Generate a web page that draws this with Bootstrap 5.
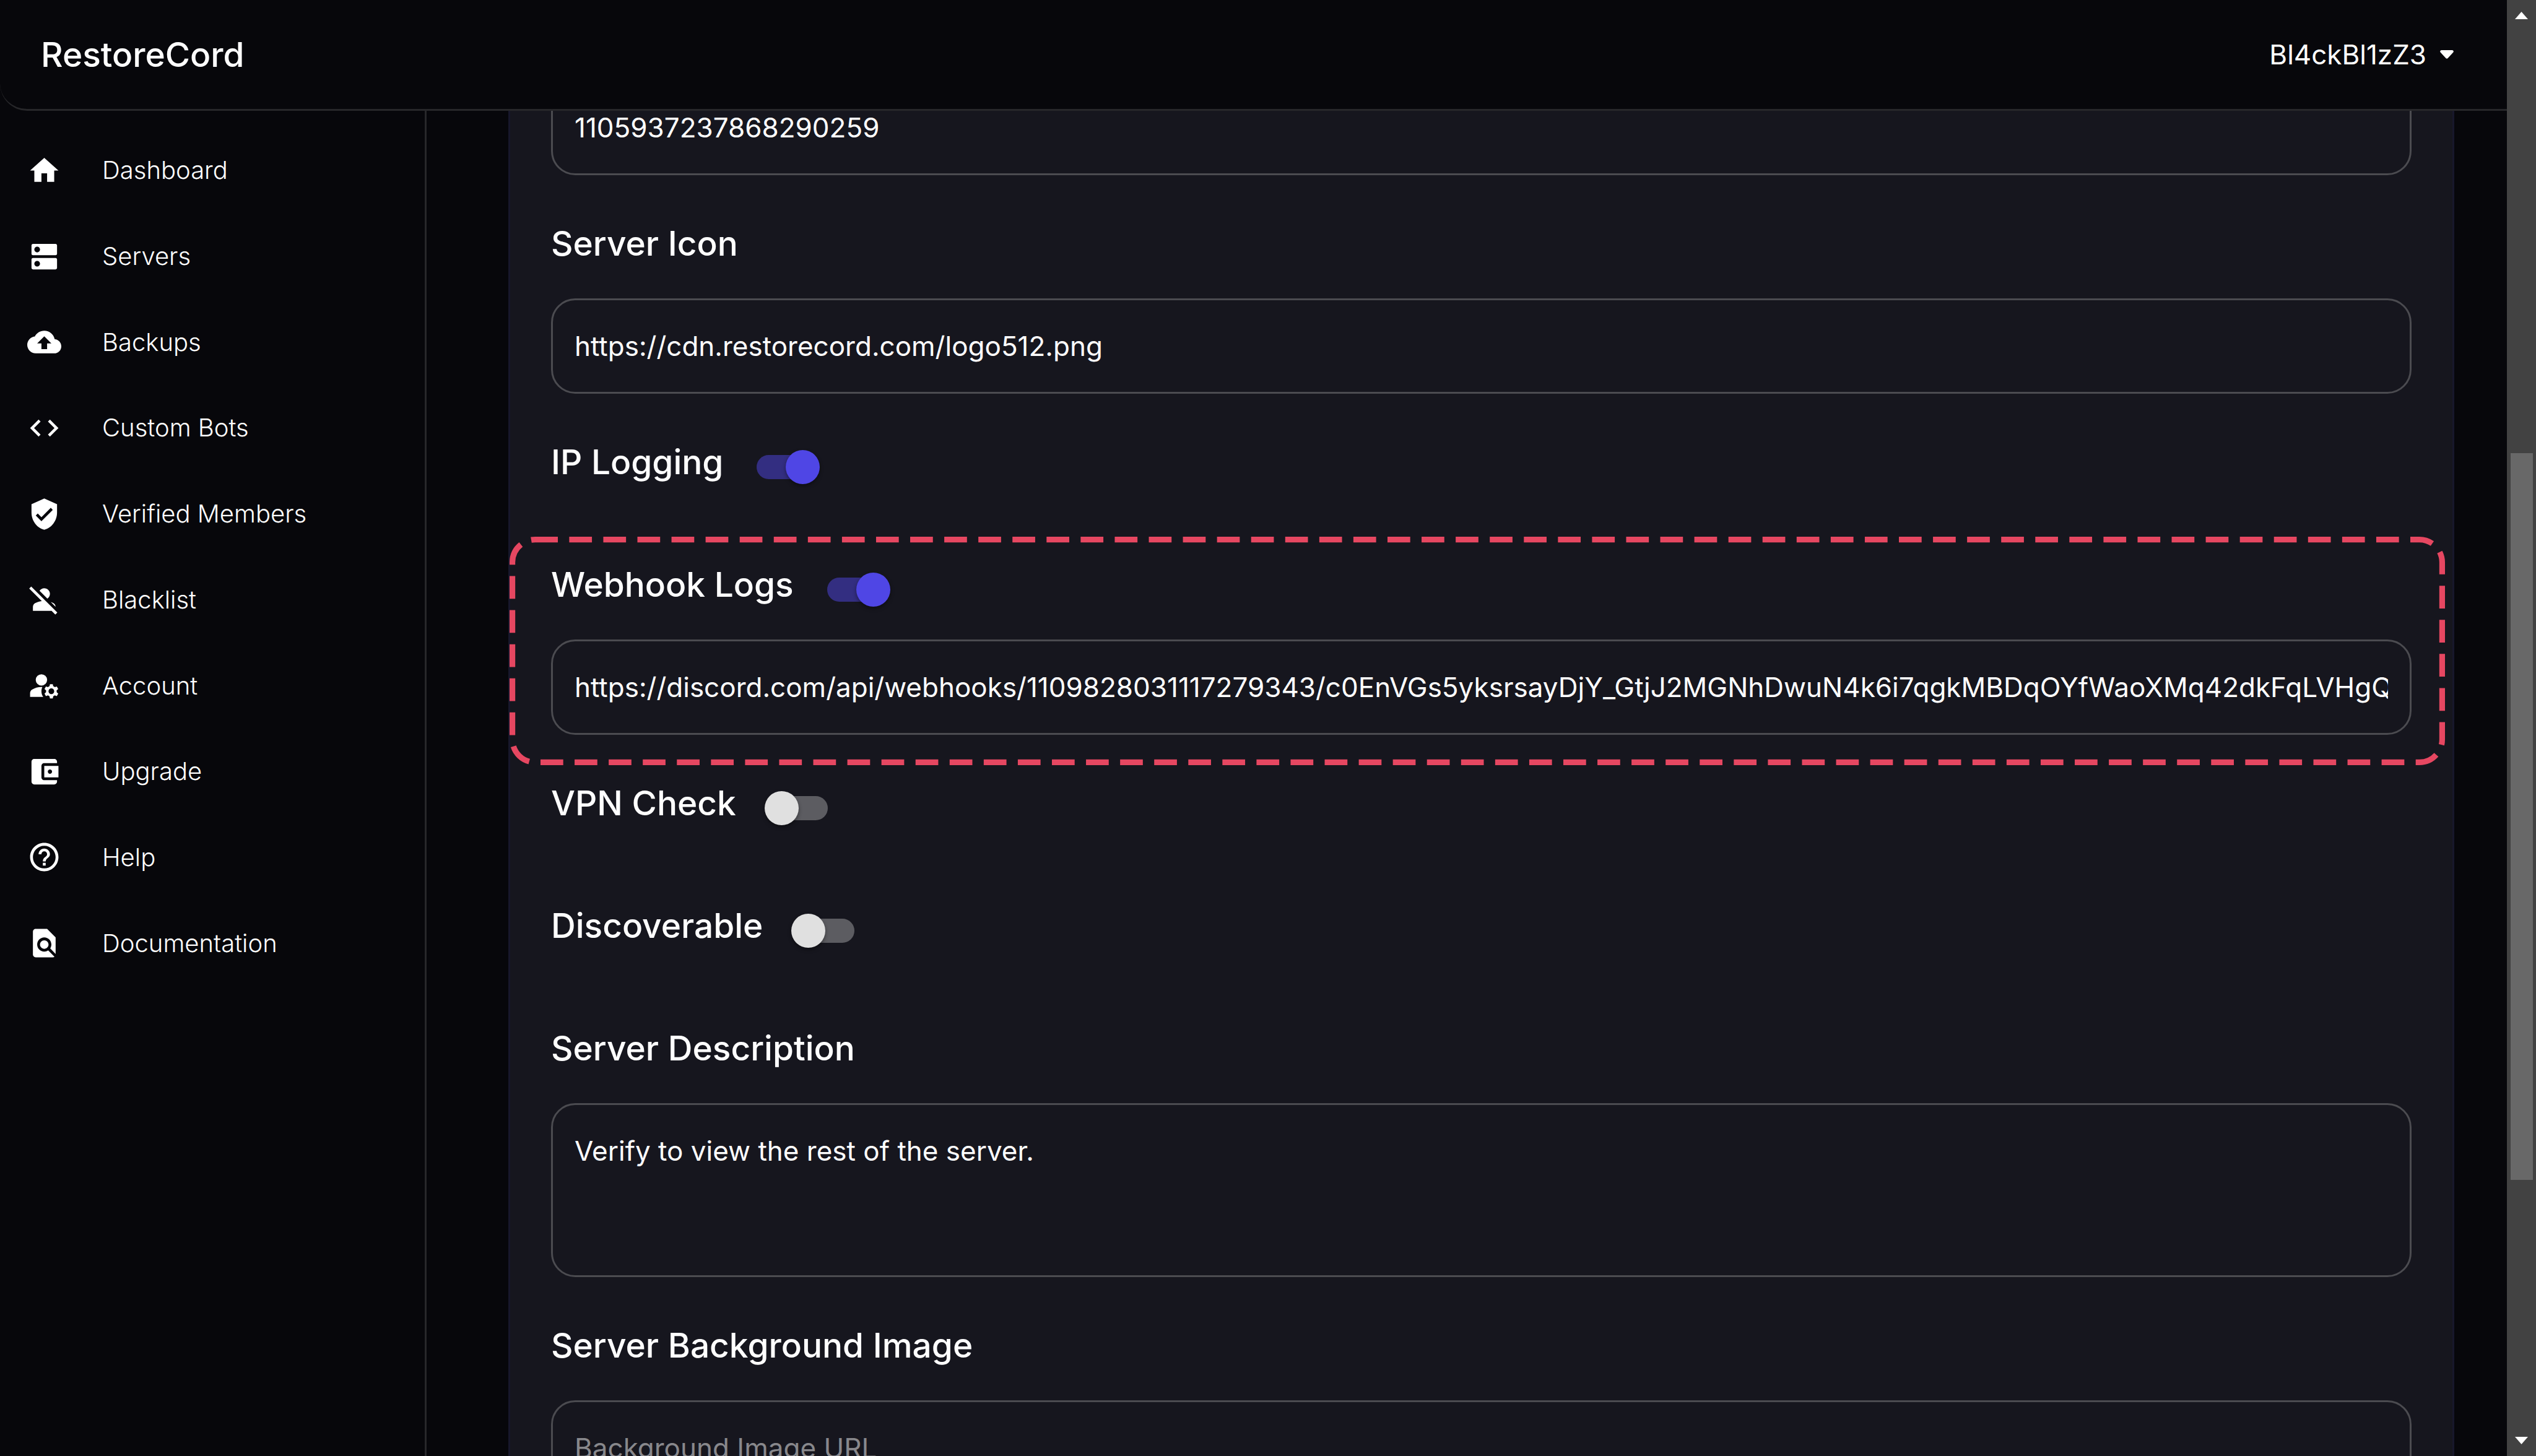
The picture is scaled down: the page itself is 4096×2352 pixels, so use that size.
<!DOCTYPE html>
<html lang="en" data-bs-theme="dark">
<head>
<meta charset="utf-8">
<meta name="viewport" content="width=device-width, initial-scale=1">
<title>RestoreCord</title>
<link href="https://cdn.jsdelivr.net/npm/bootstrap@5.3.0/dist/css/bootstrap.min.css" rel="stylesheet">
<style>
  :root { --page: #07070b; --panel: #16161e; --rule: #27272a; --field-line: #4b4b50; --accent: #4f46e5; }
  body { font-family: Inter, "Liberation Sans", sans-serif; font-size: 44px; background: var(--page); color: #fff; }
  .topbar { height: 179px; padding: 0 86px 0 66px; border-bottom: 3px solid var(--rule); border-bottom-left-radius: 44px; }
  .topbar .navbar-brand { font-size: 55px; line-height: 88px; font-weight: 500; color: #fff; }
  .user-menu { gap: 22px; padding: 0; border: 0; font-size: 44px; line-height: 66px; color: #fff; }
  .user-menu svg { width: 22px; height: 14px; }
  .side { width: 689px; padding-top: 27px; border-right: 3px solid var(--rule); }
  .side-list { height: 1387px; }
  .side-list a { gap: 66px; padding-left: 44px; font-size: 40px; font-weight: 300; color: #fff; text-decoration: none; }
  .side-list svg { width: 55px; height: 55px; fill: currentColor; }
  .content { padding: 0 85px 0 132px; min-width: 0; }
  .panel { margin-top: -120px; padding: 67px 66px; background: var(--panel); border: 3px solid #17172b; }
  .stack { gap: 66px; }
  .field-title { font-size: 55px; line-height: 88px; font-weight: 500; }
  .toggle-row { gap: 46px; }
  .toggle-only { margin-bottom: 44px; }
  .field { gap: 45px; }
  .panel .form-control { height: 154px; padding: 0 35px; border: 3px solid var(--field-line); border-radius: 39px; background: transparent; color: #fff; font-size: 44px; line-height: 63px; }
  .panel textarea.form-control { height: 281px; padding-top: 43px; resize: none; }
  .panel .form-control::placeholder { color: #88888c; opacity: 1; }
  .panel .switch { position: relative; width: 110px; height: 55px; margin: 16px 0 0; border: 0; border-radius: 28px; background: none; flex: none; }
  .switch::before { content: ""; position: absolute; left: 8px; top: 8px; width: 94px; height: 39px; border-radius: 20px; background: #5c5c61; }
  .switch::after { content: ""; position: absolute; left: 0; top: 0; width: 55px; height: 55px; border-radius: 50%; background: #e0e0e0; box-shadow: 0 3px 6px rgba(0,0,0,.4); }
  .switch:checked::before { background: #332e81; }
  .switch:checked::after { left: 55px; background: var(--accent); }
  .callout { inset: -33px -54px -49px -67px; pointer-events: none; }
  .scroller { width: 47px; padding: 19px 5px; background: #424242; }
  .scroller svg { width: 21px; height: 12px; fill: #fff; }
  .scroll-lane { margin: 12px 0; }
  .scroll-handle { background: #686868; width: 36px; }
</style>
<script src="https://cdn.jsdelivr.net/npm/bootstrap@5.3.0/dist/js/bootstrap.bundle.min.js"></script>
</head>
<body>
<div class="d-flex vh-100 overflow-hidden">
  <div class="d-flex flex-column flex-grow-1 overflow-hidden">
    <header class="topbar navbar flex-nowrap justify-content-between flex-shrink-0">
      <a class="navbar-brand p-0 m-0" href="#">RestoreCord</a>
      <button class="user-menu btn d-flex align-items-center" type="button" aria-haspopup="true">
        <span>Bl4ckBl1zZ3</span>
        <svg viewBox="0 0 22 14" aria-hidden="true"><path d="M2.5 0h17c2 0 3.200 2.200 1.600 3.800l-8.300 9a2.500 2.500 0 0 1-3.600 0l-8.300-9C-.7 2.200.5 0 2.500 0z" fill="#fff"/></svg>
      </button>
    </header>
    <div class="d-flex flex-grow-1 overflow-hidden">
      <nav class="side flex-shrink-0" aria-label="Main">
        <ul class="side-list list-unstyled d-flex flex-column m-0">
          <li class="d-flex flex-fill"><a class="d-flex align-items-center w-100" href="#"><svg viewBox="0 0 24 24"><path d="M10 20v-6h4v6h5v-8h3L12 3 2 12h3v8z"/></svg>Dashboard</a></li>
          <li class="d-flex flex-fill"><a class="d-flex align-items-center w-100" href="#"><svg viewBox="0 0 24 24"><path d="M20 13H4c-.55 0-1 .45-1 1v6c0 .55.45 1 1 1h16c.55 0 1-.45 1-1v-6c0-.55-.45-1-1-1zM7 19c-1.100 0-2-.9-2-2s.9-2 2-2 2 .9 2 2-.9 2-2 2zM20 3H4c-.55 0-1 .45-1 1v6c0 .55.45 1 1 1h16c.55 0 1-.45 1-1V4c0-.55-.45-1-1-1zM7 9c-1.100 0-2-.9-2-2s.9-2 2-2 2 .9 2 2-.9 2-2 2z"/></svg>Servers</a></li>
          <li class="d-flex flex-fill"><a class="d-flex align-items-center w-100" href="#"><svg viewBox="0 0 24 24"><path d="M19.350 10.040C18.670 6.590 15.640 4 12 4 9.110 4 6.600 5.640 5.350 8.040 2.340 8.360 0 10.910 0 14c0 3.310 2.690 6 6 6h13c2.760 0 5-2.240 5-5 0-2.640-2.050-4.780-4.650-4.960zM14 13v4h-4v-4H7l5-5 5 5h-3z"/></svg>Backups</a></li>
          <li class="d-flex flex-fill"><a class="d-flex align-items-center w-100" href="#"><svg viewBox="0 0 24 24"><path d="M9.400 16.600 4.800 12l4.600-4.600L8 6l-6 6 6 6 1.400-1.400zm5.200 0 4.600-4.600-4.600-4.600L16 6l6 6-6 6-1.400-1.400z"/></svg>Custom Bots</a></li>
          <li class="d-flex flex-fill"><a class="d-flex align-items-center w-100" href="#"><svg viewBox="0 0 24 24"><path d="M12 1 3 5v6c0 5.550 3.840 10.740 9 12 5.160-1.260 9-6.450 9-12V5l-9-4zm-2 16-4-4 1.410-1.410L10 14.170l6.590-6.590L18 9l-8 8z"/></svg>Verified Members</a></li>
          <li class="d-flex flex-fill"><a class="d-flex align-items-center w-100" href="#"><svg viewBox="0 0 24 24"><path d="M8.650 5.820C9.360 4.720 10.600 4 12 4c2.210 0 4 1.790 4 4 0 1.400-.72 2.640-1.820 3.350L8.650 5.820zM20 17.170c-.02-1.100-.63-2.110-1.610-2.620-.54-.28-1.130-.54-1.770-.76L20 17.170zm1.190 4.020L2.810 2.810 1.390 4.220l8.890 8.890c-1.810.23-3.390.79-4.670 1.450-1 .51-1.610 1.540-1.610 2.660V20h13.170l2.610 2.610 1.410-1.420z"/></svg>Blacklist</a></li>
          <li class="d-flex flex-fill"><a class="d-flex align-items-center w-100" href="#"><svg viewBox="0 0 24 24"><circle cx="10" cy="8" r="4"/><path d="M10.670 13.020c-.22-.01-.44-.02-.67-.02-2.420 0-4.680.67-6.610 1.820-.88.52-1.390 1.500-1.390 2.530V20h9.260c-.79-1.130-1.260-2.510-1.260-4 0-1.070.25-2.070.67-2.980zM20.750 16c0-.22-.03-.42-.06-.63l1.140-1.010-1-1.730-1.450.49c-.32-.27-.68-.48-1.080-.63L18 11h-2l-.3 1.490c-.4.15-.76.36-1.080.63l-1.450-.49-1 1.730 1.140 1.010c-.03.21-.06.41-.06.63s.03.42.06.63l-1.140 1.010 1 1.730 1.450-.49c.32.27.68.48 1.080.63L16 21h2l.3-1.490c.4-.15.76-.36 1.080-.63l1.450.49 1-1.730-1.140-1.010c.03-.21.06-.41.06-.63zM17 18c-1.100 0-2-.9-2-2s.9-2 2-2 2 .9 2 2-.9 2-2 2z"/></svg>Account</a></li>
          <li class="d-flex flex-fill"><a class="d-flex align-items-center w-100" href="#"><svg viewBox="0 0 24 24"><path d="M21 18v1c0 1.100-.9 2-2 2H5c-1.110 0-2-.9-2-2V5c0-1.100.89-2 2-2h14c1.100 0 2 .9 2 2v1h-9c-1.110 0-2 .9-2 2v8c0 1.100.89 2 2 2h9zm-9-2h10V8H12v8zm4-2.500c-.83 0-1.500-.67-1.500-1.500s.67-1.500 1.500-1.500 1.500.67 1.500 1.500-.67 1.500-1.500 1.500z"/></svg>Upgrade</a></li>
          <li class="d-flex flex-fill"><a class="d-flex align-items-center w-100" href="#"><svg viewBox="0 0 24 24"><path d="M11 18h2v-2h-2v2zm1-16C6.480 2 2 6.480 2 12s4.480 10 10 10 10-4.480 10-10S17.520 2 12 2zm0 18c-4.410 0-8-3.590-8-8s3.590-8 8-8 8 3.590 8 8-3.590 8-8 8zm0-14c-2.210 0-4 1.790-4 4h2c0-1.100.9-2 2-2s2 .9 2 2c0 2-3 1.750-3 5h2c0-2.250 3-2.500 3-5 0-2.210-1.790-4-4-4z"/></svg>Help</a></li>
          <li class="d-flex flex-fill"><a class="d-flex align-items-center w-100" href="#"><svg viewBox="0 0 24 24"><path d="M20 19.590V8l-6-6H6c-1.100 0-1.990.9-1.990 2L4 20c0 1.100.89 2 1.990 2H18c.45 0 .85-.15 1.190-.4l-4.430-4.430c-.8.52-1.740.83-2.760.83-2.760 0-5-2.240-5-5s2.240-5 5-5 5 2.240 5 5c0 1.020-.31 1.960-.83 2.750L20 19.590zM9 13c0 1.660 1.340 3 3 3s3-1.340 3-3-1.340-3-3-3-3 1.340-3 3z"/></svg>Documentation</a></li>
        </ul>
      </nav>
      <main class="content flex-grow-1">
        <form class="panel">
          <div class="stack d-flex flex-column">
            <input class="form-control" type="text" value="1105937237868290259" aria-label="Server ID">
            <div class="field d-flex flex-column">
              <label class="field-title" for="icon">Server Icon</label>
              <input class="form-control" id="icon" type="text" value="https://cdn.restorecord.com/logo512.png">
            </div>
            <div class="toggle-row toggle-only d-flex align-items-center">
              <label class="field-title" for="ip">IP Logging</label>
              <input class="switch form-check-input" id="ip" type="checkbox" role="switch" checked>
            </div>
            <div class="field d-flex flex-column position-relative">
              <div class="toggle-row d-flex align-items-center">
                <label class="field-title" for="hook">Webhook Logs</label>
                <input class="switch form-check-input" id="hook" type="checkbox" role="switch" checked>
              </div>
              <input class="form-control" type="text" aria-label="Webhook URL" value="https://discord.com/api/webhooks/1109828031117279343/c0EnVGs5yksrsayDjY_GtjJ2MGNhDwuN4k6i7qgkMBDqOYfWaoXMq42dkFqLVHgQ">
              <div class="callout position-absolute">
                <svg class="d-block w-100 h-100" viewBox="0 0 3406 402" preserveAspectRatio="none" aria-hidden="true"><rect x="5" y="5" width="3396" height="392" rx="40" fill="none" stroke="#e64761" stroke-width="10" stroke-dasharray="40 20"/></svg>
              </div>
            </div>
            <div class="toggle-row toggle-only d-flex align-items-center">
              <label class="field-title" for="vpn">VPN Check</label>
              <input class="switch form-check-input" id="vpn" type="checkbox" role="switch">
            </div>
            <div class="toggle-row toggle-only d-flex align-items-center">
              <label class="field-title" for="disc">Discoverable</label>
              <input class="switch form-check-input" id="disc" type="checkbox" role="switch">
            </div>
            <div class="field d-flex flex-column">
              <label class="field-title" for="desc">Server Description</label>
              <textarea class="form-control" id="desc">Verify to view the rest of the server.</textarea>
            </div>
            <div class="field d-flex flex-column">
              <label class="field-title" for="bg">Server Background Image</label>
              <input class="form-control" id="bg" type="text" placeholder="Background Image URL">
            </div>
          </div>
        </form>
      </main>
    </div>
  </div>
  <div class="scroller d-flex flex-column align-items-center flex-shrink-0" aria-hidden="true">
    <svg class="flex-shrink-0" viewBox="0 0 22 13" preserveAspectRatio="none"><path d="M11 0 22 13H0z"/></svg>
    <div class="scroll-lane d-flex flex-column flex-grow-1">
      <div style="height:30.400%"></div>
      <div class="scroll-handle" style="height:51.800%"></div>
    </div>
    <svg class="flex-shrink-0" viewBox="0 0 22 13" preserveAspectRatio="none"><path d="M0 0H22L11 13z"/></svg>
  </div>
</div>
</body>
</html>
